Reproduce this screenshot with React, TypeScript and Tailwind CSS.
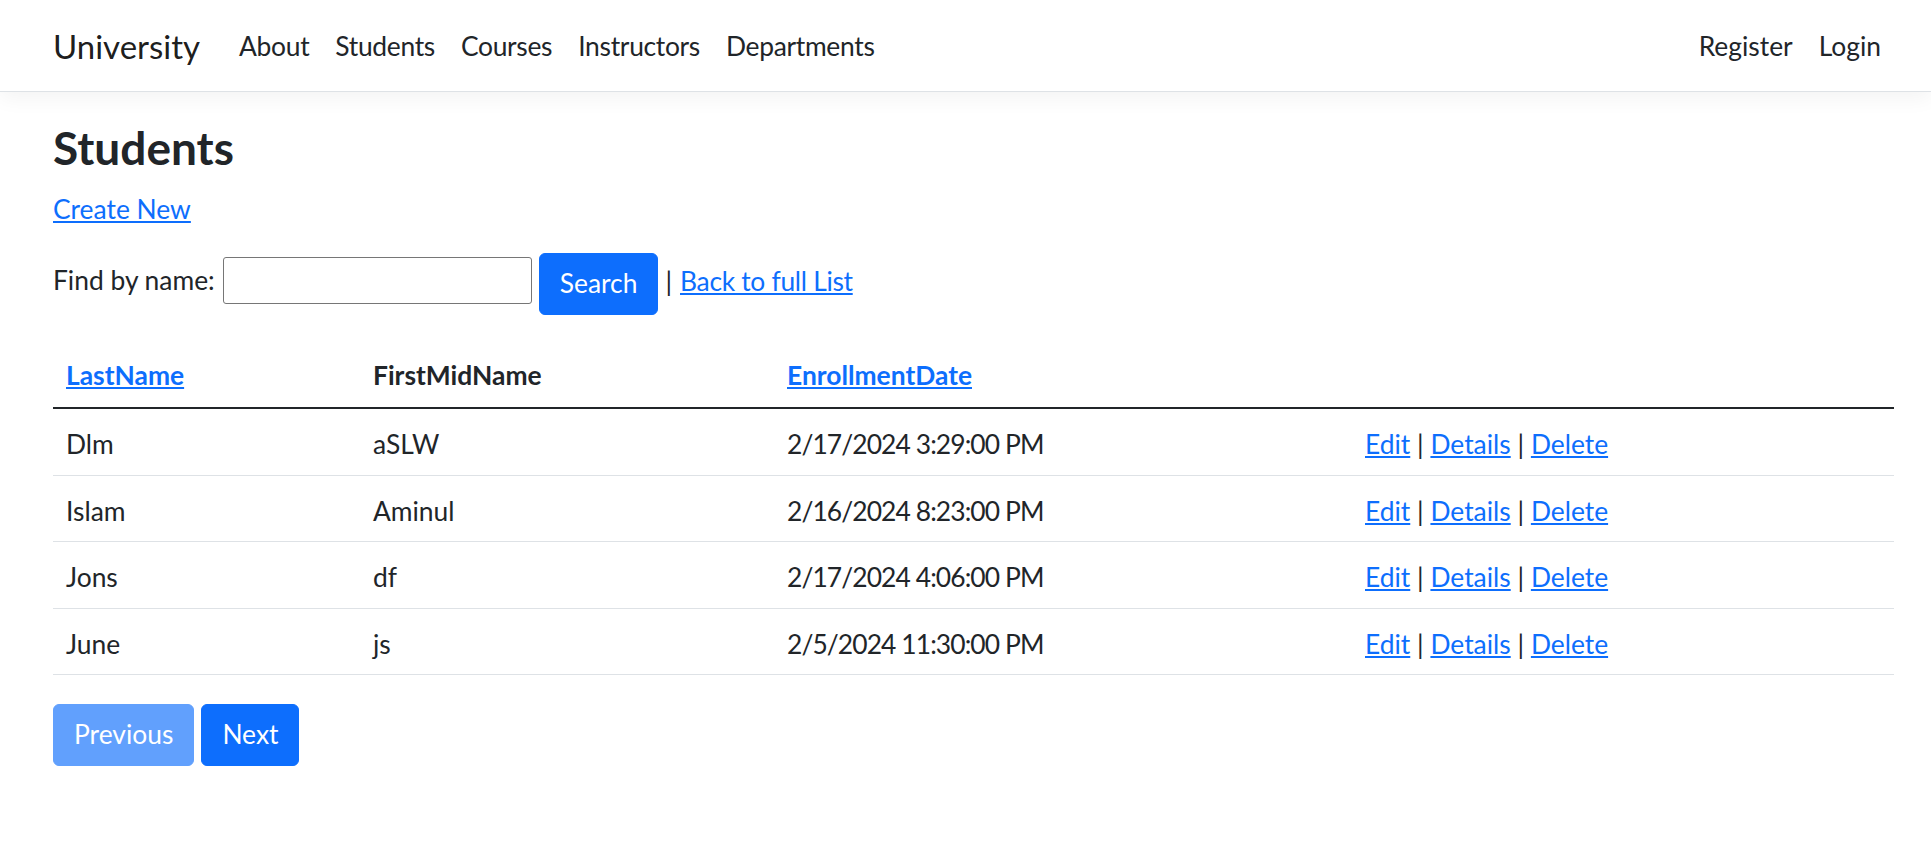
const students = [
    { last: "Dlm", first: "aSLW", date: "2/17/2024 3:29:00 PM" },
    { last: "Islam", first: "Aminul", date: "2/16/2024 8:23:00 PM" },
    { last: "Jons", first: "df", date: "2/17/2024 4:06:00 PM" },
    { last: "June", first: "js", date: "2/5/2024 11:30:00 PM" },
];

const navLinks = ["About", "Students", "Courses", "Instructors", "Departments"];

function RowActions() {
    return (
        <span>
            <a href="#" className="text-[#0d6efd] underline">
                Edit
            </a>{" "}
            |{" "}
            <a href="#" className="text-[#0d6efd] underline">
                Details
            </a>{" "}
            |{" "}
            <a href="#" className="text-[#0d6efd] underline">
                Delete
            </a>
        </span>
    );
}

export default function App() {
    return (
        <div className="min-h-screen bg-white font-['Lato','Liberation_Sans',sans-serif] text-[26.4px] leading-[1.5] text-[#212529]">
            <header className="mb-[26px] border-b border-[#dee2e6] bg-white shadow-[0_6px_20px_rgba(0,0,0,0.05)]">
                <nav className="flex h-[91px] items-center pl-[53px] pr-[37px] pt-[2px]">
                    <a href="#" className="mr-[26px] text-[33px] text-[rgba(0,0,0,0.9)]">
                        University
                    </a>
                    <ul className="flex items-center tracking-[-0.3px]">
                        {navLinks.map((l) => (
                            <li key={l}>
                                <a href="#" className="block px-[13px] py-[13px] text-[#212529]">
                                    {l}
                                </a>
                            </li>
                        ))}
                    </ul>
                    <ul className="ml-auto flex items-center">
                        <li>
                            <a href="#" className="block px-[13px] py-[13px] text-[#212529]">
                                Register
                            </a>
                        </li>
                        <li>
                            <a href="#" className="block px-[13px] py-[13px] text-[#212529]">
                                Login
                            </a>
                        </li>
                    </ul>
                </nav>
            </header>

            <main className="pl-[53px] pr-[37px]">
                <h1 className="mb-[14.5px] pt-[2px] text-[46px] font-bold leading-[1.2]">Students</h1>
                <p className="mb-[24px]">
                    <a href="#" className="text-[#0d6efd] underline">
                        Create New
                    </a>
                </p>

                <form className="mb-[28px] flex items-start">
                    <span className="mt-[8px]">Find by name:</span>
                    <input
                        type="text"
                        className="ml-[8px] mt-[4px] h-[47px] w-[309px] rounded-[3px] border border-[#767676] bg-white px-[3px]"
                    />
                    <button
                        type="button"
                        className="ml-[7px] h-[62px] rounded-[6px] border border-[#0d6efd] bg-[#0d6efd] px-[20px] text-white"
                    >
                        Search
                    </button>
                    <span className="ml-[7px] mr-[8px] mt-[9px]">|</span>
                    <a href="#" className="mt-[9px] text-[#0d6efd] underline tracking-[-0.3px]">
                        Back to full List
                    </a>
                </form>

                <table className="mb-[28.5px] w-full table-fixed border-collapse text-left">
                    <thead>
                        <tr className="border-b-2 border-[#212529]">
                            <th className="w-[307px] px-[13px] pb-[11px] pt-[13px] font-bold">
                                <a href="#" className="text-[#0d6efd] underline">
                                    LastName
                                </a>
                            </th>
                            <th className="w-[414px] px-[13px] pb-[11px] pt-[13px] font-bold">FirstMidName</th>
                            <th className="w-[578px] px-[13px] pb-[11px] pt-[13px] font-bold">
                                <a href="#" className="text-[#0d6efd] underline">
                                    EnrollmentDate
                                </a>
                            </th>
                            <th className="px-[13px] pb-[11px] pt-[13px]"></th>
                        </tr>
                    </thead>
                    <tbody>
                        {students.map((s) => (
                            <tr key={s.last} className="border-b border-[#dee2e6]">
                                <td className="px-[13px] pb-[10px] pt-[16px]">{s.last}</td>
                                <td className="px-[13px] pb-[10px] pt-[16px]">{s.first}</td>
                                <td className="px-[13px] pb-[10px] pt-[16px] tracking-[-0.9px]">{s.date}</td>
                                <td className="px-[13px] pb-[10px] pt-[16px]">
                                    <RowActions />
                                </td>
                            </tr>
                        ))}
                    </tbody>
                </table>

                <div className="flex gap-[7px]">
                    <button
                        type="button"
                        disabled
                        className="h-[62px] rounded-[6px] border border-[#0d6efd] bg-[#0d6efd] px-[20px] text-white opacity-65"
                    >
                        Previous
                    </button>
                    <button
                        type="button"
                        className="h-[62px] rounded-[6px] border border-[#0d6efd] bg-[#0d6efd] px-[20px] text-white"
                    >
                        Next
                    </button>
                </div>
            </main>
        </div>
    );
}
